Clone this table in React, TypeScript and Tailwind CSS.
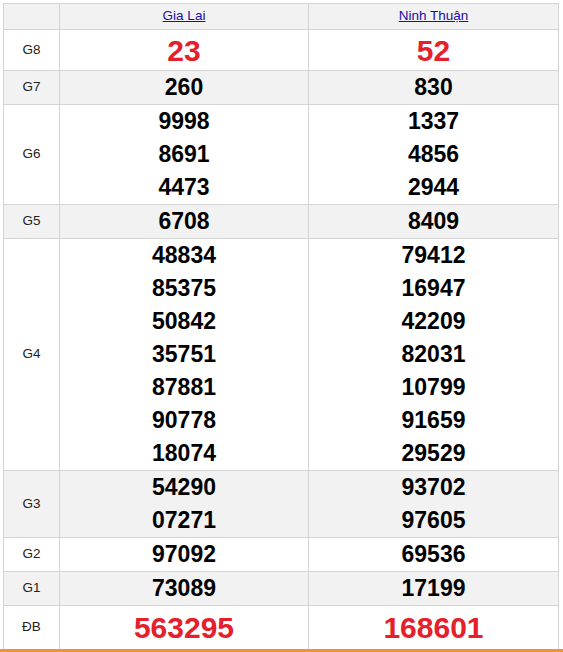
import React from "react";

type Row = { label: string; a: string[]; b: string[]; h: string; bg: boolean; red?: boolean; big?: boolean };

const rows: Row[] = [
  { label: "G8", a: ["23"], b: ["52"], h: "h-[41px]", bg: false, red: true },
  { label: "G7", a: ["260"], b: ["830"], h: "h-[34px]", bg: true },
  { label: "G6", a: ["9998", "8691", "4473"], b: ["1337", "4856", "2944"], h: "h-[100px]", bg: false },
  { label: "G5", a: ["6708"], b: ["8409"], h: "h-[34px]", bg: true },
  {
    label: "G4",
    a: ["48834", "85375", "50842", "35751", "87881", "90778", "18074"],
    b: ["79412", "16947", "42209", "82031", "10799", "91659", "29529"],
    h: "h-[232px]",
    bg: false,
  },
  { label: "G3", a: ["54290", "07271"], b: ["93702", "97605"], h: "h-[67px]", bg: true },
  { label: "G2", a: ["97092"], b: ["69536"], h: "h-[34px]", bg: false },
  { label: "G1", a: ["73089"], b: ["17199"], h: "h-[34px]", bg: true },
  { label: "ĐB", a: ["563295"], b: ["168601"], h: "h-[43px]", bg: false, red: true, big: true },
];

function Nums({ list, red }: { list: string[]; red?: boolean }) {
  return (
    <div className="flex flex-col items-center justify-center h-full">
      {list.map((n, i) =>
        red ? (
          <div key={i} className="text-[30px] leading-[33px] font-bold text-[#e3202b]">
            {n}
          </div>
        ) : (
          <div key={i} className="text-[23px] leading-[33px] font-bold text-black">
            {n}
          </div>
        )
      )}
    </div>
  );
}

export default function App() {
  return (
    <div className="w-[563px] h-[652px] bg-white overflow-hidden" style={{ fontFamily: '"Liberation Sans", Arial, sans-serif' }}>
      <div className="pl-[3px] pt-[3px]">
        <div className="w-[556px] border-l border-t border-[#d4d4d4]">
          <div className="flex h-[26px] bg-[#f2f2f2]">
            <div className="w-[56px] border-r border-b border-[#d4d4d4]" />
            <div className="w-[249px] border-r border-b border-[#d4d4d4] flex items-center justify-center">
              <a className="text-[13.5px] text-[#1a0dab] underline">Gia Lai</a>
            </div>
            <div className="w-[250px] border-r border-b border-[#d4d4d4] flex items-center justify-center">
              <a className="text-[13.5px] text-[#1a0dab] underline">Ninh Thuận</a>
            </div>
          </div>
          {rows.map((r, i) => (
            <div key={i} className={`flex ${r.h} ${r.bg ? "bg-[#f2f2f2]" : "bg-white"}`}>
              <div
                className={`w-[56px] border-r border-[#d4d4d4] flex items-center justify-center text-[13.5px] text-[#222] ${
                  r.big ? "" : "border-b"
                }`}
              >
                {r.label}
              </div>
              <div className={`w-[249px] border-r border-[#d4d4d4] ${r.big ? "" : "border-b"}`}>
                <Nums list={r.a} red={r.red} />
              </div>
              <div className={`w-[250px] border-r border-[#d4d4d4] ${r.big ? "" : "border-b"}`}>
                <Nums list={r.b} red={r.red} />
              </div>
            </div>
          ))}
        </div>
      </div>
      <div className="h-[4px] w-full bg-[#f0913a]" />
    </div>
  );
}
